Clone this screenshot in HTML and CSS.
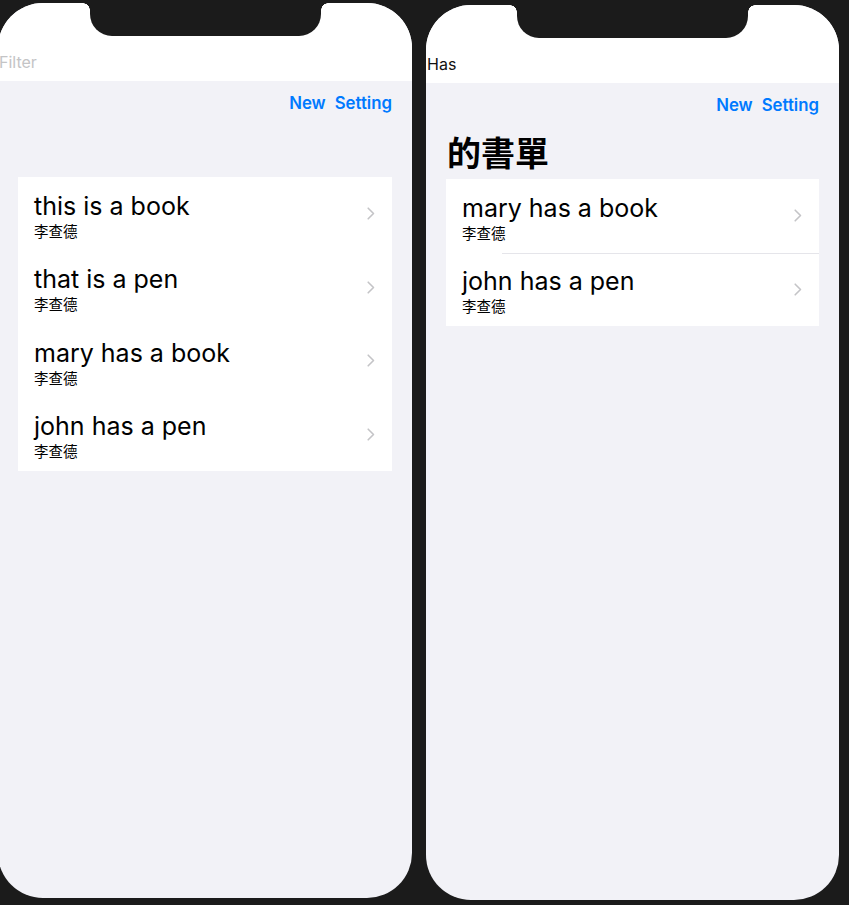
FILE: index.html
```html
<!DOCTYPE html>
<html lang="zh-Hant">
<head>
<meta charset="utf-8">
<title>書單</title>
<link rel="stylesheet" href="styles.css">
</head>
<body>
<div class="stage">
  <section class="phone phone-left">
    <div class="notch"></div>
    <header class="nav"><span class="nav-field placeholder">Filter</span></header>
    <main class="content">
      <div class="toolbar"><a class="bar-btn">New</a><a class="bar-btn">Setting</a></div>
      <h1 class="large-title"></h1>
      <ul class="list">
        <li class="row">
          <div class="row-text"><div class="row-title">this is a book</div><div class="row-sub">李查德</div></div>
          <svg class="chev" width="8" height="13" viewBox="0 0 8 13"><path d="M1.2 1.2 L6.5 6.5 L1.2 11.8" fill="none" stroke="#c4c4c7" stroke-width="1.6" stroke-linecap="round" stroke-linejoin="round"/></svg>
        </li>
        <li class="row">
          <div class="row-text"><div class="row-title">that is a pen</div><div class="row-sub">李查德</div></div>
          <svg class="chev" width="8" height="13" viewBox="0 0 8 13"><path d="M1.2 1.2 L6.5 6.5 L1.2 11.8" fill="none" stroke="#c4c4c7" stroke-width="1.6" stroke-linecap="round" stroke-linejoin="round"/></svg>
        </li>
        <li class="row">
          <div class="row-text"><div class="row-title">mary has a book</div><div class="row-sub">李查德</div></div>
          <svg class="chev" width="8" height="13" viewBox="0 0 8 13"><path d="M1.2 1.2 L6.5 6.5 L1.2 11.8" fill="none" stroke="#c4c4c7" stroke-width="1.6" stroke-linecap="round" stroke-linejoin="round"/></svg>
        </li>
        <li class="row">
          <div class="row-text"><div class="row-title">john has a pen</div><div class="row-sub">李查德</div></div>
          <svg class="chev" width="8" height="13" viewBox="0 0 8 13"><path d="M1.2 1.2 L6.5 6.5 L1.2 11.8" fill="none" stroke="#c4c4c7" stroke-width="1.6" stroke-linecap="round" stroke-linejoin="round"/></svg>
        </li>
      </ul>
    </main>
  </section>

  <section class="phone phone-right">
    <div class="notch"></div>
    <header class="nav"><span class="nav-field">Has</span></header>
    <main class="content">
      <div class="toolbar"><a class="bar-btn">New</a><a class="bar-btn">Setting</a></div>
      <h1 class="large-title">的書單</h1>
      <ul class="list list-separated">
        <li class="row">
          <div class="row-text"><div class="row-title">mary has a book</div><div class="row-sub">李查德</div></div>
          <svg class="chev" width="8" height="13" viewBox="0 0 8 13"><path d="M1.2 1.2 L6.5 6.5 L1.2 11.8" fill="none" stroke="#c4c4c7" stroke-width="1.6" stroke-linecap="round" stroke-linejoin="round"/></svg>
        </li>
        <li class="row">
          <div class="row-text"><div class="row-title">john has a pen</div><div class="row-sub">李查德</div></div>
          <svg class="chev" width="8" height="13" viewBox="0 0 8 13"><path d="M1.2 1.2 L6.5 6.5 L1.2 11.8" fill="none" stroke="#c4c4c7" stroke-width="1.6" stroke-linecap="round" stroke-linejoin="round"/></svg>
        </li>
      </ul>
    </main>
  </section>
</div>
</body>
</html>
```
FILE: styles.css
```css
* { box-sizing: border-box; }

html, body {
  margin: 0;
  padding: 0;
  width: 849px;
  height: 905px;
  overflow: hidden;
  background: #1b1b1b;
  font-family: Inter, "Noto Sans CJK TC", sans-serif;
  color: #000;
}

.stage {
  display: flex;
  align-items: flex-start;
  gap: 14px;
  padding-top: 3px;
  margin-left: -2px;
}

.phone {
  position: relative;
  height: 895px;
  border-radius: 45px;
  overflow: hidden;
  background: #f2f2f7;
  display: flex;
  flex-direction: column;
}

.phone-left { width: 414px; }
.phone-right { width: 413px; margin-top: 2px; }

.notch {
  position: absolute;
  top: 0;
  left: 50%;
  width: 231px;
  height: 33px;
  margin-left: -115.5px;
  background: #1b1b1b;
  border-radius: 0 0 22px 22px;
}
.notch::before,
.notch::after {
  content: "";
  position: absolute;
  top: 0;
  width: 7px;
  height: 7px;
}
.notch::before {
  left: -7px;
  background: radial-gradient(circle at 0 100%, transparent 6.5px, #1b1b1b 7px);
}
.notch::after {
  right: -7px;
  background: radial-gradient(circle at 100% 100%, transparent 6.5px, #1b1b1b 7px);
}

.nav {
  height: 78px;
  flex: none;
  background: #fff;
  display: flex;
  align-items: flex-end;
  padding: 0 0 9px 1px;
}

.nav-field {
  font-size: 16px;
  line-height: 20px;
  color: #111;
}
.nav-field.placeholder { color: #c4c4c6; }

.content { flex: 1; }

.toolbar {
  height: 44px;
  display: flex;
  justify-content: flex-end;
  align-items: center;
  gap: 9px;
  padding-right: 20px;
}

.bar-btn {
  color: #007aff;
  font-size: 16.8px;
  font-weight: 600;
  line-height: 20px;
}

.large-title {
  margin: 0;
  height: 52px;
  padding: 5px 0 0 21px;
  font-size: 34px;
  line-height: 40px;
  font-weight: 700;
  font-family: "Noto Sans CJK TC", sans-serif;
}

.list {
  list-style: none;
  margin: 0 20px;
  padding: 0;
  background: #fff;
}

.row {
  height: 73.5px;
  display: flex;
  align-items: center;
  padding: 0 17px 0 16px;
}

.list-separated .row + .row {
  background: linear-gradient(#e5e5ea, #e5e5ea) no-repeat 56px 0 / calc(100% - 56px) 1px;
}

.row-text {
  flex: 1;
  margin-top: 3.5px;
}

.row-title {
  font-size: 25px;
  line-height: 30px;
}

.row-sub {
  font-size: 14.5px;
  line-height: 20px;
  font-family: "Noto Sans CJK TC", sans-serif;
}

.chev { flex: none; display: block; }
```
